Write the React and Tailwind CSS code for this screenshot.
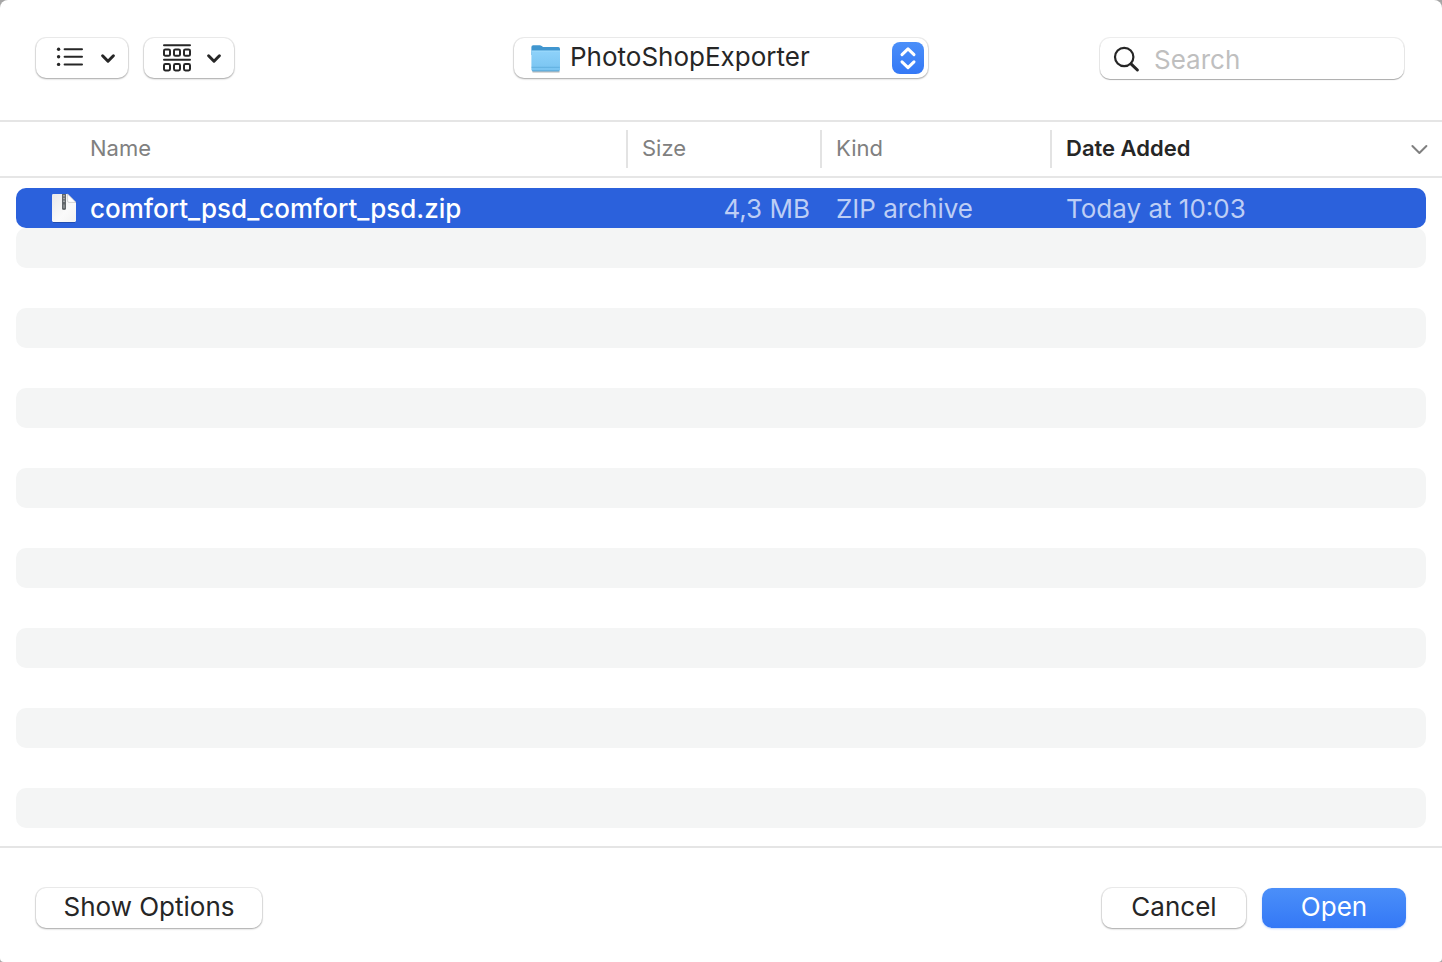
const raised =
  'rounded-[10px] bg-white shadow-[0_0_0_1px_rgba(0,0,0,0.07),0_1px_2px_rgba(0,0,0,0.3)]';

const stripes = Array.from({ length: 15 }, (_, i) => i % 2 === 0);

function ListIcon() {
  return (
    <svg width="28" height="22" viewBox="0 0 28 22" fill="none" stroke="#262626" strokeWidth="2" strokeLinecap="round" aria-hidden="true">
      <path d="M8.6 2.2H26M8.6 9.8H26M8.6 17.4H26" />
      <g fill="#262626" stroke="none">
        <circle cx="2.6" cy="2.2" r="1.7" />
        <circle cx="2.6" cy="9.8" r="1.7" />
        <circle cx="2.6" cy="17.4" r="1.7" />
      </g>
    </svg>
  );
}

function GroupIcon() {
  return (
    <svg width="28" height="28" viewBox="0 0 28 28" fill="none" stroke="#262626" strokeWidth="2" strokeLinecap="round" aria-hidden="true">
      <path d="M1 1.3H27M1 15.7H27" />
      <rect x="1" y="5.4" width="6" height="6.4" rx="1.4" />
      <rect x="11" y="5.4" width="6" height="6.4" rx="1.4" />
      <rect x="21" y="5.4" width="6" height="6.4" rx="1.4" />
      <rect x="1" y="20" width="6" height="6.4" rx="1.4" />
      <rect x="11" y="20" width="6" height="6.4" rx="1.4" />
      <rect x="21" y="20" width="6" height="6.4" rx="1.4" />
    </svg>
  );
}

function MenuChevron() {
  return (
    <svg width="16" height="12" viewBox="0 0 16 12" fill="none" stroke="#262626" strokeWidth="3" strokeLinecap="round" strokeLinejoin="round" aria-hidden="true">
      <path d="M2.6 3.8L8 9.2L13.4 3.8" />
    </svg>
  );
}

function FolderIcon() {
  return (
    <svg width="32" height="30" viewBox="0 0 32 30" aria-hidden="true">
      <defs>
        <linearGradient id="folder" x1="0" y1="0" x2="0" y2="1">
          <stop offset="0" stopColor="#8ed2fa" />
          <stop offset="1" stopColor="#78c3f0" />
        </linearGradient>
      </defs>
      <path d="M2.5 28.8H29.5" stroke="#000" strokeOpacity="0.3" strokeWidth="1.4" />
      <path d="M1.4 4Q1.4 2.2 3.2 2.2H9.6Q10.8 2.2 11.7 3L12.4 3.6Q13 4.1 14 4.1H28.2Q30 4.1 30 5.9V12H1.4Z" fill="#4096cf" />
      <path d="M1.4 7.8H30V26.6Q30 28.2 28.4 28.2H3Q1.4 28.2 1.4 26.6Z" fill="url(#folder)" />
      <path d="M1.4 8H30" stroke="#a4defc" strokeWidth="0.8" />
      <path d="M1.6 24.3H29.8" stroke="#5eaedd" strokeWidth="0.9" />
      <path d="M2 27.8H29.4" stroke="#5aa6d4" strokeWidth="0.9" />
    </svg>
  );
}

function ZipIcon() {
  return (
    <svg width="26" height="30" viewBox="0 0 26 30" className="shrink-0" aria-hidden="true">
      <defs>
        <linearGradient id="sheet" x1="0" y1="0" x2="1" y2="1">
          <stop offset="0" stopColor="#e9e9e9" />
          <stop offset="0.6" stopColor="#fafafa" />
          <stop offset="1" stopColor="#f2f2f2" />
        </linearGradient>
      </defs>
      <path d="M2 29.2H24" stroke="#000" strokeOpacity="0.25" strokeWidth="1.2" />
      <path d="M1 2.2Q1 1 2.2 1H16.6L25 9.4V27.6Q25 29 23.8 29H2.2Q1 29 1 27.6Z" fill="url(#sheet)" />
      <path d="M16.6 1L25 9.4H18Q16.6 9.4 16.6 8Z" fill="#fff" stroke="#c4c4c4" strokeWidth="0.7" />
      <path d="M11 1H15V15.4Q15 17 13 17Q11 17 11 15.4Z" fill="#626669" />
      <path d="M13 2V10" stroke="#b9bcbe" strokeWidth="1.4" strokeDasharray="1.4 1.4" />
      <path d="M13 11.5V15" stroke="#9da0a2" strokeWidth="1.2" />
    </svg>
  );
}

function Toolbar() {
  return (
    <header className="grid grid-cols-[1fr_414px_1fr] items-start border-b-2 border-[#e5e5e5] px-9 pt-[38px] pb-[41px]">
      <div className="flex gap-4">
        <button type="button" aria-label="View as list" className={`${raised} flex h-10 w-[92px] items-center justify-between pr-3 pl-5`}>
          <ListIcon />
          <MenuChevron />
        </button>
        <button type="button" aria-label="Group items" className={`${raised} flex h-10 w-[90px] items-center justify-between pr-3 pl-[19px]`}>
          <GroupIcon />
          <MenuChevron />
        </button>
      </div>

      <div className="relative">
        <select aria-label="Location" className={`${raised} block h-10 w-full appearance-none pr-12 pb-0.5 pl-14 text-[26px] leading-9 text-[#262626]`}>
          <option>PhotoShopExporter</option>
        </select>
        <span className="pointer-events-none absolute inset-y-0 left-4 flex items-center">
          <FolderIcon />
        </span>
        <span className="pointer-events-none absolute top-1 right-1 flex size-8 items-center justify-center rounded-lg bg-linear-to-b from-[#4b8ff9] to-[#3478f6]">
          <svg width="18" height="24" viewBox="0 0 18 24" fill="none" stroke="#fff" strokeWidth="3" strokeLinecap="round" strokeLinejoin="round" aria-hidden="true">
            <path d="M3 8.6L9 2.8L15 8.6M3 15.8L9 21.6L15 15.8" />
          </svg>
        </span>
      </div>

      <label className="mr-0.5 flex h-[41px] w-[304px] items-center gap-3 justify-self-end rounded-[10px] bg-white px-3 shadow-[0_0_0_1px_rgba(0,0,0,0.07),0_1px_1px_rgba(0,0,0,0.28)]">
        <svg width="30" height="30" viewBox="0 0 30 30" fill="none" stroke="#262626" strokeLinecap="round" className="shrink-0" aria-hidden="true">
          <circle cx="12.2" cy="13" r="9.2" strokeWidth="2.2" />
          <path d="M19 19.8L25.4 26" strokeWidth="3" />
        </svg>
        <input type="search" aria-label="Search" placeholder="Search" className="w-full min-w-0 bg-transparent pt-0.5 text-[26px] leading-9 outline-none placeholder:text-[#bfbfbf]" />
      </label>
    </header>
  );
}

function HeadCell({ children, divided = true }) {
  return (
    <th scope="col" className="border-b-2 border-[#e6e6e6] p-0 pt-2 pb-2 text-left font-normal">
      <div className={divided ? 'flex h-[38px] items-center border-l-2 border-[#e3e3e3] pb-0.5 pl-[14px]' : 'flex h-[38px] items-center pb-0.5 pl-[90px]'}>
        {children}
      </div>
    </th>
  );
}

function FileTable() {
  return (
    <table className="w-full table-fixed border-separate border-spacing-0">
      <colgroup>
        <col />
        <col className="w-[194px]" />
        <col className="w-[230px]" />
        <col className="w-[392px]" />
      </colgroup>
      <thead className="text-[22px] leading-7 text-[#808080]">
        <tr>
          <HeadCell divided={false}>Name</HeadCell>
          <HeadCell>Size</HeadCell>
          <HeadCell>Kind</HeadCell>
          <HeadCell>
            <button type="button" className="flex w-full items-center justify-between pr-[14px] font-semibold text-[#262626]">
              Date Added
              <svg width="18" height="14" viewBox="0 0 18 14" fill="none" stroke="#808080" strokeWidth="2" strokeLinecap="round" strokeLinejoin="round" aria-hidden="true">
                <path d="M2.4 5L9.4 12L16.4 5" />
              </svg>
            </button>
          </HeadCell>
        </tr>
      </thead>
      <tbody className="text-[26px] leading-[42px] text-[#bdcef5]">
        <tr>
          <td className="p-0 pt-[10px] pl-4">
            <div className="flex h-10 items-center gap-[13px] rounded-l-[10px] bg-[#2b61dc] pl-[35px] font-medium whitespace-nowrap text-white">
              <ZipIcon />
              <span className="pt-0.5 leading-10">comfort_psd_comfort_psd.zip</span>
            </div>
          </td>
          <td className="p-0 pt-[10px]">
            <div className="h-10 bg-[#2b61dc] pr-[10px] text-right">4,3 MB</div>
          </td>
          <td className="p-0 pt-[10px]">
            <div className="h-10 bg-[#2b61dc] pl-4">ZIP archive</div>
          </td>
          <td className="p-0 pt-[10px] pr-4">
            <div className="h-10 rounded-r-[10px] bg-[#2b61dc] pl-4">Today at 10:03</div>
          </td>
        </tr>
        {stripes.map((shaded, i) => (
          <tr key={i} aria-hidden="true">
            <td colSpan={4} className="px-4 py-0">
              <div className={shaded ? 'h-10 rounded-[10px] bg-[#f4f5f5]' : 'h-10'} />
            </td>
          </tr>
        ))}
      </tbody>
    </table>
  );
}

export default function App() {
  return (
    <div className="min-h-screen bg-[#a6a6a6] font-['Inter',sans-serif]">
      <main className="flex min-h-screen flex-col rounded-t-lg rounded-b-sm bg-white text-[#262626]">
        <Toolbar />
        <section aria-label="Files" className="flex-1 pb-[18px]">
          <FileTable />
        </section>
        <footer className="flex items-start gap-4 border-t-2 border-[#e5e5e5] px-9 pt-10 pb-[34px] text-[26px] leading-9">
          <button type="button" className={`${raised} mr-auto h-10 w-[226px] pb-0.5`}>Show Options</button>
          <button type="button" className={`${raised} h-10 w-36 pb-0.5`}>Cancel</button>
          <button type="button" className="h-10 w-36 rounded-[10px] bg-linear-to-b from-[#4b8ff9] to-[#3478f6] pb-0.5 text-white shadow-[0_1px_2px_rgba(52,120,246,0.3)]">Open</button>
        </footer>
      </main>
    </div>
  );
}
